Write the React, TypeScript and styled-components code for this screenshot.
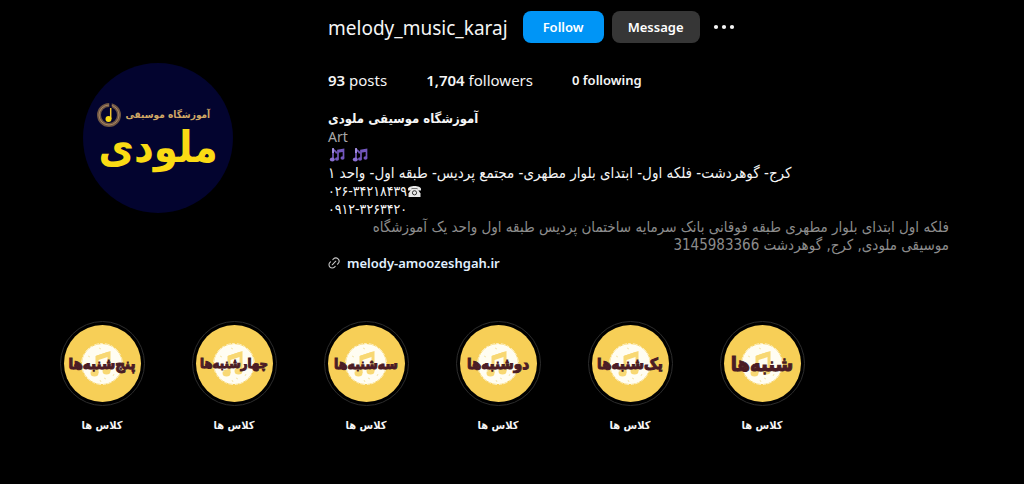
import React from "react";
import styled, { createGlobalStyle } from "styled-components";

const latin = `"Noto Sans", "DejaVu Sans", sans-serif`;
const persian = `"DejaVu Sans Condensed", "DejaVu Sans", sans-serif`;

const GlobalStyle = createGlobalStyle`
  *, *::before, *::after { box-sizing: border-box; }
  body {
    margin: 0;
    background: #000;
    color: #f5f5f5;
    font: 14px/18px ${latin};
  }
`;

const Page = styled.main`
  padding: 10px 75px 48px 15px;
`;

const Header = styled.header`
  display: grid;
  grid-template-columns: 285px minmax(0, 1fr);
  column-gap: 28px;
`;

const AvatarCell = styled.div`
  display: flex;
  justify-content: center;
  align-items: flex-start;
  padding-top: 53px;
`;

const Avatar = styled.div`
  display: flex;
  flex-direction: column;
  align-items: flex-start;
  width: 150px;
  height: 150px;
  padding: 40px 0 0 14px;
  border-radius: 50%;
  background: #03042f;
  white-space: nowrap;
`;

const AvatarTop = styled.div`
  display: flex;
  align-items: center;
  gap: 5px;
  height: 24px;
`;

const AvatarCaption = styled.span`
  font: bold 10px/12px ${persian};
  color: #cfa765;
`;

const AvatarName = styled.strong`
  padding-left: 2px;
  font: bold 43px/40px ${persian};
  color: #fadb14;
`;

const TopRow = styled.div`
  display: flex;
  align-items: center;
  height: 34px;
`;

const Username = styled.h1`
  margin: 0 15px 0 0;
  padding-top: 2px;
  font: 400 19px/30px ${latin};
`;

const Button = styled.button<{ $primary?: boolean }>`
  height: 32px;
  margin-right: 8px;
  padding: 0;
  width: ${(p) => (p.$primary ? "81px" : "88px")};
  border: 0;
  border-radius: 8px;
  background: ${(p) => (p.$primary ? "#0095f6" : "#363636")};
  color: #fff;
  font: 600 13px/18px ${latin};
`;

const MoreButton = styled.button`
  display: flex;
  padding: 4px;
  border: 0;
  background: none;
  color: #f5f5f5;
`;

const Stats = styled.ul`
  display: flex;
  align-items: center;
  gap: 39px;
  margin: 24px 0 0;
  padding: 0;
  list-style: none;
  line-height: 24px;
`;

const Stat = styled.li<{ $small?: boolean }>`
  font-size: ${(p) => (p.$small ? "13px" : "15px")};
  font-weight: ${(p) => (p.$small ? 600 : 400)};
  b { font-weight: 600; }
`;

const Bio = styled.section`
  margin-top: 18px;
`;

const BioName = styled.h2`
  margin: 0;
  font: bold 13px/18px ${persian};
`;

const Line = styled.div<{ $muted?: boolean }>`
  display: flex;
  align-items: center;
  height: 18px;
  white-space: nowrap;
  color: ${(p) => (p.$muted ? "#a8a8a8" : "#f5f5f5")};
`;

const PersianLine = styled(Line)<{ $digits?: boolean }>`
  font-family: ${persian};
  font-size: ${(p) => (p.$digits ? "14px" : "15px")};
`;

const Notes = styled(Line)`
  gap: 6px;
  padding-left: 1px;
`;

const Address = styled.p`
  margin: 0;
  font: 15px/18px ${persian};
  color: #8c8c8c;
  white-space: nowrap;
`;

const Site = styled.a`
  display: inline-flex;
  align-items: center;
  gap: 7px;
  height: 18px;
  color: #e0f1ff;
  font: 600 13px/18px ${latin};
  text-decoration: none;
`;

const Highlights = styled.ul`
  display: flex;
  margin: 48px 0 0;
  padding: 0 0 0 21px;
  list-style: none;
`;

const Highlight = styled.li`
  display: flex;
  flex: 0 0 auto;
  flex-direction: column;
  align-items: center;
  width: 132px;
`;

const Ring = styled.div`
  display: grid;
  place-items: center;
  width: 85px;
  height: 85px;
  border: 1px solid #2c2c2c;
  border-radius: 50%;
`;

const Cover = styled.div`
  display: grid;
  place-items: center;
  width: 77px;
  height: 77px;
  border-radius: 50%;
  background: #f7cf57;
  > * { grid-area: 1 / 1; }
`;

const Day = styled.strong<{ $size: number }>`
  z-index: 1;
  font: bold ${(p) => p.$size}px/24px ${persian};
  color: #4b1c25;
  -webkit-text-stroke: 1px #4b1c25;
  white-space: nowrap;
`;

const Caption = styled.span`
  margin-top: 11px;
  font: bold 11px/18px ${persian};
`;

const BrandNote = () => (
  <svg width="24" height="24" viewBox="0 0 24 24" fill="none" aria-hidden="true">
    <circle cx="12" cy="12" r="10" stroke="#6f5643" strokeWidth="4" />
    <circle cx="12" cy="12" r="10" stroke="#a98662" strokeWidth="1" />
    <path d="M13.500 0v5" stroke="#03042f" strokeWidth="2.500" />
    <path d="M13.700 5v11" stroke="#f2c230" strokeWidth="1.500" />
    <circle cx="11.500" cy="16" r="3" fill="#fadb14" />
  </svg>
);

const MusicNotes = () => (
  <svg width="17" height="16" viewBox="0 0 17 16" fill="none" aria-hidden="true">
    <path d="M4 12V2c1 2 3.500 1.800 3.500 4.500M9 11.500V3.500l5.500-1v8M9 5l5.500-1" stroke="#7357bd" strokeWidth="1.700" />
    <path d="M4 1v5" stroke="#b5a0ee" strokeWidth="1.500" />
    <ellipse cx="3.300" cy="12.500" rx="2.500" ry="2.100" fill="#8a6fd2" />
    <ellipse cx="8" cy="12" rx="2" ry="1.700" fill="#7357bd" />
    <ellipse cx="13.500" cy="11" rx="2" ry="1.700" fill="#7357bd" />
  </svg>
);

const Phone = () => (
  <svg width="15" height="14" viewBox="0 0 15 14" aria-hidden="true">
    <path d="M1 5C1 1 14 1 14 5v1.500h-3.500V4.500h-6v2H1z" fill="#e8e8e8" />
    <path d="M4.500 5h6l3 4.500V13h-12V9.500z" fill="#e8e8e8" />
    <circle cx="7.500" cy="8.800" r="2.100" fill="#e8e8e8" stroke="#333" strokeWidth="1" />
  </svg>
);

const LinkIcon = () => (
  <svg width="12" height="12" viewBox="0 0 24 24" fill="none" stroke="#c6c6c6" strokeWidth="2.200" strokeLinecap="round" aria-hidden="true">
    <path d="m9.726 5.123 1.228-1.228a6.470 6.470 0 0 1 9.150 9.152l-1.227 1.227m-4.603 4.603-1.228 1.228a6.470 6.470 0 0 1-9.150-9.152l1.227-1.227" />
    <path d="M8.471 15.529 15.529 8.471" />
  </svg>
);

const CoverArt = () => (
  <svg width="46" height="46" viewBox="0 0 46 46" fill="none" aria-hidden="true">
    <circle cx="23" cy="23" r="20" fill="#fffdf2" />
    <circle cx="23" cy="23" r="20.500" stroke="#fdf0c0" strokeWidth="1" strokeDasharray="5 1 3 2" />
    <path d="M18 32V16l12-4v18" stroke="#f8d873" strokeWidth="3" />
    <path d="M18 17l12-4" stroke="#f8d873" strokeWidth="5" />
    <ellipse cx="15.500" cy="32" rx="4" ry="3.500" fill="#f8d873" />
    <ellipse cx="27.500" cy="30" rx="4" ry="3.500" fill="#f8d873" />
    <path d="M9 15l2 1M12 29l1 2M21 39l1 2M25 37l2 1M34 35l1-2M38 27l-2 1M20 7l2 1" stroke="#f5e7ae" />
  </svg>
);

const days = [
  { name: "پنج‌شنبه‌ها", size: 15 },
  { name: "چهارشنبه‌ها", size: 13 },
  { name: "سه‌شنبه‌ها", size: 14 },
  { name: "دوشنبه‌ها", size: 15 },
  { name: "یک‌شنبه‌ها", size: 15 },
  { name: "شنبه‌ها", size: 20 },
];

export default function App() {
  return (
    <Page>
      <GlobalStyle />
      <Header>
        <AvatarCell>
          <Avatar>
            <AvatarTop>
              <BrandNote />
              <AvatarCaption>آموزشگاه موسیقی</AvatarCaption>
            </AvatarTop>
            <AvatarName>ملودی</AvatarName>
          </Avatar>
        </AvatarCell>
        <div>
          <TopRow>
            <Username>melody_music_karaj</Username>
            <Button $primary>Follow</Button>
            <Button>Message</Button>
            <MoreButton aria-label="Options">
              <svg width="24" height="24" viewBox="0 0 24 24" fill="currentColor" aria-hidden="true">
                <circle cx="4" cy="12" r="2.100" />
                <circle cx="12" cy="12" r="2.100" />
                <circle cx="20" cy="12" r="2.100" />
              </svg>
            </MoreButton>
          </TopRow>
          <Stats>
            <Stat><b>93</b> posts</Stat>
            <Stat><b>1,704</b> followers</Stat>
            <Stat $small>0 following</Stat>
          </Stats>
          <Bio>
            <BioName>آموزشگاه موسیقی ملودی</BioName>
            <Line $muted>Art</Line>
            <Notes><MusicNotes /><MusicNotes /></Notes>
            <PersianLine>کرج- گوهردشت- فلکه اول- ابتدای بلوار مطهری- مجتمع پردیس- طبقه اول- واحد ۱</PersianLine>
            <PersianLine $digits>۰۲۶-۳۴۲۱۸۴۳۹<Phone /></PersianLine>
            <PersianLine $digits>۰۹۱۲-۳۲۶۳۴۲۰</PersianLine>
            <Address dir="rtl">
              فلکه اول ابتدای بلوار مطهری طبقه فوقانی بانک سرمایه ساختمان پردیس طبقه اول واحد یک آموزشگاه
              <br />
              موسیقی ملودی, کرج, گوهردشت 3145983366
            </Address>
            <Site href="#site"><LinkIcon />melody-amoozeshgah.ir</Site>
          </Bio>
        </div>
      </Header>
      <Highlights>
        {days.map((day) => (
          <Highlight key={day.name}>
            <Ring>
              <Cover>
                <CoverArt />
                <Day $size={day.size}>{day.name}</Day>
              </Cover>
            </Ring>
            <Caption>کلاس ها</Caption>
          </Highlight>
        ))}
      </Highlights>
    </Page>
  );
}
